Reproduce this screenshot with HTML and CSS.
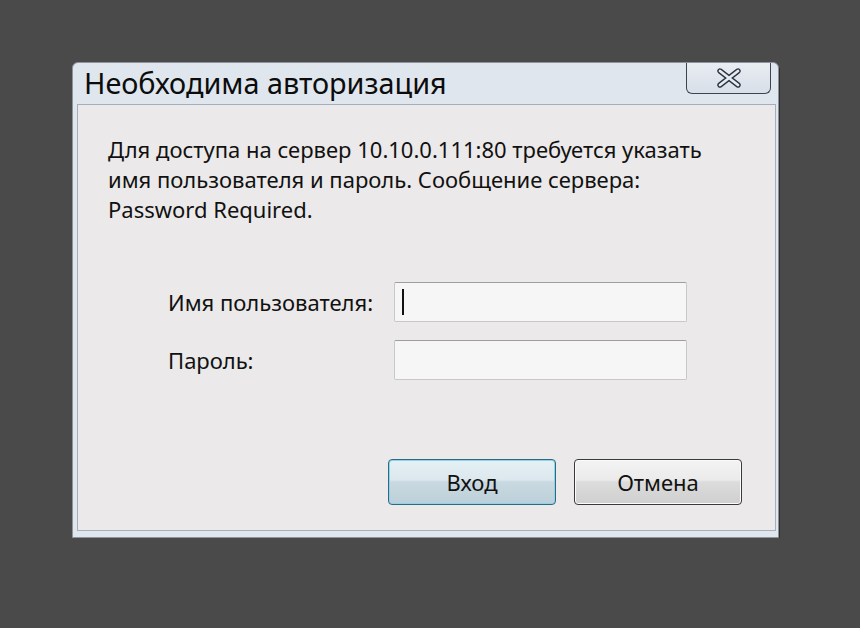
FILE: index.html
```html
<!DOCTYPE html>
<html lang="ru">
  <head>
    <meta charset="UTF-8" />
    <title>Необходима авторизация</title>
    <link rel="stylesheet" href="styles.css">
  </head>
  <body>
    <!-- Auth dialog -->
    <div class="dialog">
      <div class="titlebar">
        <span class="title">Необходима авторизация</span>
        <button class="close-btn" aria-label="Закрыть">
          <svg width="26" height="20" viewBox="0 0 26 20">
            <path d="M4 3 L22 17 M22 3 L4 17" stroke="#2d3340" stroke-width="5.4" stroke-linecap="round"/>
            <path d="M4 3 L22 17 M22 3 L4 17" stroke="#e6ebf1" stroke-width="2.8" stroke-linecap="round"/>
          </svg>
        </button>
      </div>
      <div class="client">
        <p class="message">
          Для доступа на сервер 10.10.0.111:80 требуется указать<br />
          имя пользователя и пароль. Сообщение сервера:<br />
          Password Required.
        </p>
        <div class="form">
          <div class="row">
            <label for="user">Имя пользователя:</label>
            <div class="field"><span class="caret"></span></div>
          </div>
          <div class="row">
            <label for="pass">Пароль:</label>
            <div class="field"></div>
          </div>
        </div>
        <div class="actions">
          <button class="btn btn-default">Вход</button>
          <button class="btn">Отмена</button>
        </div>
      </div>
    </div>
  </body>
</html>
```

FILE: styles.css
```css
* {
  box-sizing: border-box;
}

body {
  margin: 0;
  padding: 0;
  background: #4a4a4a;
  font-family: "Noto Sans", "Open Sans", sans-serif;
  color: #111;
}

.dialog {
  width: 707px;
  height: 476px;
  margin: 62px 0 0 72px;
  padding: 0 2px 6px 4px;
  background: #dfe6ee;
  border: 1px solid #8d939c;
  border-radius: 6px 6px 0 0;
  box-shadow: 1px 2px 0 #2e2e2e;
}

/* Title bar */
.titlebar {
  height: 41px;
  display: flex;
  justify-content: space-between;
  align-items: flex-start;
}

.title {
  margin: 0 0 0 7px;
  font-size: 28.8px;
  line-height: 40px;
  color: #0c0c0c;
}

.close-btn {
  width: 85px;
  height: 31px;
  margin-right: 5px;
  padding: 0;
  background: linear-gradient(#e9edf3, #d8dfe8);
  border: 1px solid #3d4350;
  border-top: none;
  border-radius: 0 0 6px 6px;
  display: flex;
  align-items: center;
  justify-content: center;
}

/* Client area */
.client {
  height: 427px;
  padding: 29px 33px 0 30px;
  background: #ebe9e9;
  border: 1px solid #a6aebd;
}

.message {
  margin: 0;
  font-size: 22px;
  line-height: 30px;
}

.form {
  margin: 58px 0 0 60px;
  display: flex;
  flex-direction: column;
  gap: 18px;
}

.row {
  display: flex;
  align-items: center;
}

.row label {
  width: 226px;
  font-size: 22px;
}

.field {
  width: 293px;
  height: 40px;
  background: #f6f6f6;
  border: 1px solid #c8c8c8;
  border-top-color: #9e9e9e;
  border-radius: 2px;
  display: flex;
  align-items: center;
}

.caret {
  width: 2px;
  height: 26px;
  margin-left: 7px;
  background: #111;
}

.actions {
  margin-top: 79px;
  display: flex;
  justify-content: flex-end;
  gap: 18px;
}

.btn {
  width: 168px;
  height: 46px;
  font-family: inherit;
  font-size: 22px;
  color: #111;
  background: linear-gradient(#f3f3f3 0%, #ebebeb 45%, #dcdcdc 50%, #cfcfcf 100%);
  border: 1px solid #3a3a3a;
  border-radius: 4px;
  box-shadow: inset 0 0 0 1px #fcfcfc;
}

.btn-default {
  border-color: #2f6b80;
  background: linear-gradient(#e6f0f5 0%, #dce8ee 45%, #c9d9e1 50%, #bccfd8 100%);
  box-shadow: inset 0 0 0 1px #8fd3ea;
}
```
